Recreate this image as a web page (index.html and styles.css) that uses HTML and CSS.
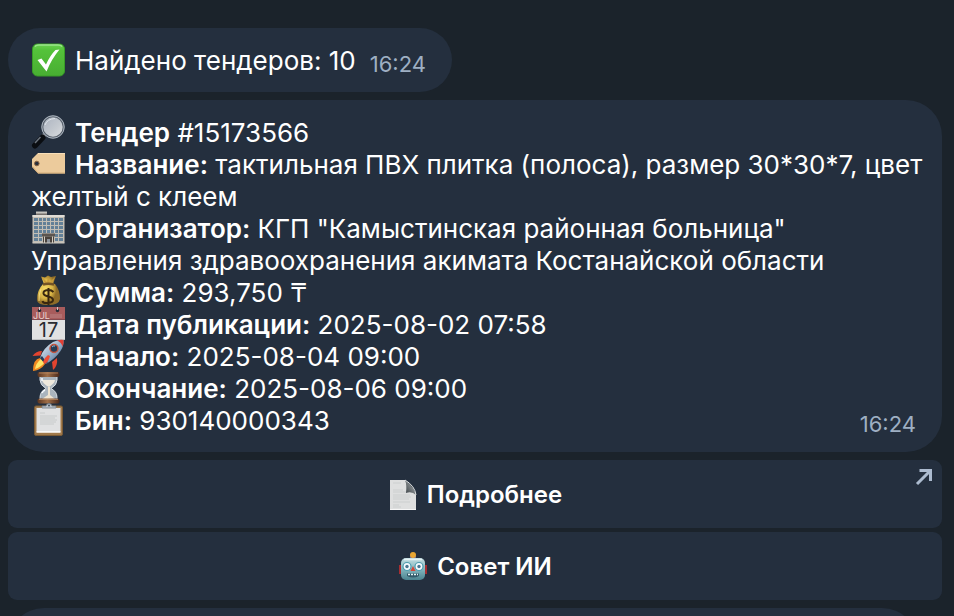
FILE: index.html
```html
<!DOCTYPE html>
<html lang="ru">
<head>
<meta charset="utf-8">
<meta name="viewport" content="width=device-width, initial-scale=1">
<title>Тендеры</title>
<link rel="stylesheet" href="styles.css">
</head>
<body>
<main class="chat">
  <article class="bubble bubble-short">
    <p class="line"><svg class="emoji" viewBox="0 0 34 34" aria-hidden="true"><defs><linearGradient id="green" x2="0" y2="1"><stop stop-color="#6bd451"/><stop offset=".2" stop-color="#54c23a"/><stop offset="1" stop-color="#48ae32"/></linearGradient></defs><rect x="1.5" y="1" width="32" height="32" rx="5" fill="url(#green)" stroke="#389c27"/><path d="M4 3.500Q5 2 8 2h19q3 0 4 1.500" fill="none" stroke="#9ae58a" stroke-width="1.500"/><path d="M6.500 17l4-1.500 4.500 6Q19 12.500 24.500 7l4-.5Q20.500 16 15.500 28.500z" fill="#fff"/></svg>Найдено тендеров: 10</p>
    <time class="time">16:24</time>
  </article>

  <article class="bubble bubble-card">
    <p class="line"><svg class="emoji" viewBox="0 0 34 34" aria-hidden="true"><defs><linearGradient id="lens" x2="1" y2="1"><stop stop-color="#aab2bf"/><stop offset=".6" stop-color="#c5cad0"/><stop offset="1" stop-color="#dde0e3"/></linearGradient></defs><path d="M14 19l-3 3.500" stroke="#b9bec4" stroke-width="4"/><path d="M11.500 22.500L4 30.500" stroke="#0a0d11" stroke-width="6" stroke-linecap="round"/><path d="M9.500 22L4 28" stroke="#6b737d" stroke-width="1.500"/><circle cx="22" cy="12" r="10.700" fill="url(#lens)" stroke="#59626d" stroke-width="2"/><circle cx="22" cy="12" r="11.200" fill="none" stroke="#aab3be" stroke-width="1"/><path d="M14 10Q16 4 24 3.500" fill="none" stroke="#dfe5eb" stroke-width="1"/></svg><b>Тендер</b> #15173566</p>
    <p class="line line-plain"><svg class="emoji" viewBox="0 0 34 34" aria-hidden="true"><path d="M7 6h27v20.500H7L1 20v-8z" fill="#eccb9c"/><path d="M7 6.500h27" stroke="#f8dfb9"/><path d="M1.500 19.500L7 26h27" fill="none" stroke="#d5ad79"/><circle cx="5.800" cy="16.500" r="2.300" fill="#29303c" stroke="#8b6544"/></svg><b>Название:</b> тактильная ПВХ плитка (полоса), размер 30*30*7, цвет желтый с клеем</p>
    <p class="line"><svg class="emoji" viewBox="0 0 34 34" aria-hidden="true"><path d="M5 .500h11v3H5z" fill="#c5c4bf"/><path d="M5 2.500h11v2H5z" fill="#746f6b"/><path d="M1.500 4h32v28h-32z" fill="#c2beb5"/><path d="M1.500 4h32v2h-32z" fill="#e0ddd6"/><path d="M3 7h4v3H3zm5 0h3v3H8zm4 0h3v3h-3zm4 0h3v3h-3zm4 0h3v3h-3zm4 0h3v3h-3zm4 0h4v3h-4zM3 11h4v3H3zm5 0h3v3H8zm4 0h3v3h-3zm4 0h3v3h-3zm4 0h3v3h-3zm4 0h3v3h-3zm4 0h4v3h-4zM3 15h4v3H3zm5 0h3v3H8zm4 0h3v3h-3zm4 0h3v3h-3zm4 0h3v3h-3zm4 0h3v3h-3zm4 0h4v3h-4zM3 19h4v3H3zm5 0h3v3H8zm4 0h3v3h-3zm4 0h3v3h-3zm4 0h3v3h-3zm4 0h3v3h-3zm4 0h4v3h-4zM3 23h4v3H3zm5 0h3v3H8zm16 0h3v3h-3zm4 0h4v3h-4zM3 27h4v3H3zm5 0h3v3H8zm16 0h3v3h-3zm4 0h4v3h-4z" fill="#638097"/><path d="M11 22.500h13v3H11z" fill="#5c554f"/><path d="M12 25.500h11V32H12z" fill="#49423d"/><path d="M13.500 25.500v6.500M21.500 25.500v6.500" stroke="#d2ccc0"/><path d="M16 28h3v4h-3z" fill="#8c939b"/><path d="M1.500 32h32" stroke="#d0cbc0"/></svg><b>Организатор:</b> КГП "Камыстинская районная больница" Управления здравоохранения акимата Костанайской области</p>
    <p class="line"><svg class="emoji" viewBox="0 0 34 34" aria-hidden="true"><defs><radialGradient id="sack" cx=".35" cy=".45"><stop stop-color="#f4d965"/><stop offset=".65" stop-color="#d9b445"/><stop offset="1" stop-color="#8f6c27"/></radialGradient></defs><path d="M10 1.500l4 1 3-2 3 1.500 5-1-3 8h2q5 6 5 15-1 6-12 6T6 25q0-10 6-16h1z" fill="url(#sack)"/><path d="M11 2l5 5 1-5 2 5 5-5-3 7h-7z" fill="#c89b3b"/><path d="M12 9.500q5-1.500 11 0" stroke="#735326" stroke-width="2.500" fill="none"/><path d="M22.500 17Q20 14.500 17 15q-5 .500-4.500 3.500.500 2 4.500 3 5 1 5 3.500t-5 3-5.500-2M17.500 13v17" fill="none" stroke="#39270f" stroke-width="2"/><path d="M10 14Q7.500 20 8 26" fill="none" stroke="#f4dc82"/></svg><b>Сумма:</b> 293,750 ₸</p>
    <p class="line"><svg class="emoji" viewBox="0 0 34 34" aria-hidden="true"><rect x="1" y="0" width="33" height="33" fill="#e0e1e2"/><path d="M1 0h33v13H1z" fill="#a85c5c"/><path d="M1 12.500h33" stroke="#844b50"/><circle cx="8.500" cy="3.500" r="1.700" fill="#252c37"/><circle cx="26.500" cy="3.500" r="1.700" fill="#252c37"/><path d="M8.500 3V0m18 3V0" stroke="#d5c3c2" stroke-width="1"/><text class="month" x="2" y="12">JUL</text><path d="M20 7v4m2-4v4m2-4v4m2-4v4m2-4v4m2-4v4" stroke="#bb8484"/><text class="day" x="17.500" y="30" text-anchor="middle">17</text><path d="M1 32.500h33" stroke="#bfc1c3"/></svg><b>Дата публикации:</b> 2025-08-02 07:58</p>
    <p class="line"><svg class="emoji" viewBox="0 0 34 34" aria-hidden="true"><defs><linearGradient id="hull" x2="1" y2="1"><stop stop-color="#f1f6fb"/><stop offset=".5" stop-color="#9bb2cb"/><stop offset="1" stop-color="#33577f"/></linearGradient></defs><path d="M11 12Q5 12 1.500 17l8-.5zM21 23l1 8q5-4 4-12z" fill="#e3442f"/><path d="M9 19Q2 20 2 32q8-1 12-7z" fill="#f28a20"/><path d="M10 20q-5 4-6 10 6-2 9-6z" fill="#ffe568"/><path d="M9 19q3-10 13-16Q27 .500 32.500 1q.500 6-3 11Q24 20 15 25z" fill="url(#hull)"/><path d="M26 1.500q3-1 6.500-.5.500 3-.8 6.500Q30 3 26 1.500z" fill="#df3e34"/><path d="M9 19q2 3 6 6l2-2q-4-2-6-6z" fill="#243b59"/><circle cx="23" cy="9.500" r="4" fill="#253c55" stroke="#c6553e" stroke-width="1.500"/><path d="M21 8q1-1.500 3-1" fill="none" stroke="#89bada"/><path d="M17 16q-4 3-5 7l2 2q4-3 5-8z" fill="#ee4d35"/></svg><b>Начало:</b> 2025-08-04 09:00</p>
    <p class="line"><svg class="emoji" viewBox="0 0 34 34" aria-hidden="true"><defs><linearGradient id="wood"><stop stop-color="#5b3520"/><stop offset=".45" stop-color="#a06f48"/><stop offset="1" stop-color="#49281b"/></linearGradient></defs><path d="M9 5h17v4q0 5-6 8.500 6 3 6 9v3H9v-3q0-6 6-9-6-3.500-6-8.500z" fill="#aab4bd" stroke="#dae0e5"/><path d="M11 9h13q0 3-6 7-6-3-7-7z" fill="#eee8dc"/><path d="M17 16h2v8l5 4H11l6-4z" fill="#efe4d1"/><path d="M11 22q1-2 3-3M11 7v3" stroke="#f7faff" stroke-width="1.500"/><rect x="6.500" y="1" width="22" height="5" rx="2" fill="url(#wood)"/><rect x="6.500" y="27.500" width="22" height="5" rx="2" fill="url(#wood)"/><path d="M8 2h19M8 28.500h19" stroke="#c1946c" stroke-width=".700"/></svg><b>Окончание:</b> 2025-08-06 09:00</p>
    <p class="line"><svg class="emoji" viewBox="0 0 34 34" aria-hidden="true"><rect x="3.500" y="3" width="28" height="29.500" rx="1.500" fill="#a17a4b" stroke="#795a35"/><path d="M5.500 5h24v24h-24z" fill="#e0e1e2"/><path d="M5.500 29h24" stroke="#fff" stroke-width="1.500"/><path d="M9 10h5m-5 3h17m-17 2h15m-15 2h17m-17 2h16m-16 2h14" stroke="#c3c5c7" stroke-width=".800"/><path d="M11 5V3h4q.500-2.500 3-2.500T21 3h4v2z" fill="#b8c0c8" stroke="#737c86" stroke-width=".800"/><circle cx="18" cy="2.500" r="1" fill="#42505e"/></svg><b>Бин:</b> 930140000343</p>
    <time class="time time-corner">16:24</time>
  </article>

  <div class="actions">
    <button class="action" type="button"><svg class="action-emoji" viewBox="0 0 30 32" aria-hidden="true"><defs><linearGradient id="fold" x1="1" y1="0" x2="0" y2="1"><stop stop-color="#b6bbbc"/><stop offset="1" stop-color="#343b40"/></linearGradient></defs><path d="M2 1h15l11 14v16H2z" fill="#dedfdf"/><path d="M5 4h8M5 11h10m-10 2h13M5 16h17M5 18h18M5 20h16M5 23h17M5 26h6m-6 2h8" stroke="#c6c8c9" stroke-width=".700"/><path d="M17 1q2 5 1 13 6-2 10 2Q27 9 17 1z" fill="url(#fold)"/><path d="M17 1q10 6 11 15" fill="none" stroke="#dde0e0"/><path d="M2 30.500h26" stroke="#f6f6f6"/></svg>Подробнее<svg class="external" viewBox="0 0 18 18" aria-hidden="true"><path d="M2 16L15 3M4.500 2.500h11V13" fill="none" stroke="#acbbcf" stroke-width="3"/></svg></button>
    <button class="action" type="button"><svg class="action-emoji" viewBox="0 0 30 32" aria-hidden="true"><defs><linearGradient id="face" x2="0" y2="1"><stop stop-color="#c4dfe2"/><stop offset=".5" stop-color="#83b7bf"/><stop offset="1" stop-color="#4b838f"/></linearGradient></defs><path d="M1 14h4v9H1zm24 0h4v9h-4z" fill="#a62e32"/><path d="M12 5h6v4h-6z" fill="#72689a"/><circle cx="15" cy="4" r="3" fill="#e9a632"/><rect x="3" y="7" width="24" height="22" rx="5" fill="url(#face)"/><path d="M6 8.500h18" stroke="#e5f3f4" stroke-width="1.500"/><g fill="#f5fbff" stroke="#4e9cae" stroke-width="1.200"><circle cx="9" cy="15.500" r="4"/><circle cx="21" cy="15.500" r="4"/></g><circle cx="9" cy="15.500" r="1.700" fill="#4a7790"/><circle cx="21" cy="15.500" r="1.700" fill="#4a7790"/><path d="M15 15l2.500 5h-5z" fill="#d34739"/><path d="M9 22.500h12v2.500q-6 3-12 0z" fill="#315969"/><path d="M10 23.500h10" stroke="#e2f3f4" stroke-width="1.500" stroke-dasharray="2 1"/></svg>Совет ИИ</button>
  </div>

  <article class="bubble bubble-next"></article>
</main>
</body>
</html>
```
FILE: styles.css
```css
* {
  box-sizing: border-box;
}

body {
  margin: 0;
  background: #1b232b;
  color: #fff;
  font-family: Inter, "Noto Sans", sans-serif;
}

.chat {
  display: flex;
  flex-direction: column;
  align-items: flex-start;
  gap: 8px;
  height: 100vh;
  padding: 28px 12px 0 8px;
  overflow: hidden;
}

.chat > * {
  flex-shrink: 0;
}

.bubble {
  position: relative;
  padding: 17px 12px 15px 23px;
  background: #242f3e;
  border-radius: 36px;
}

.bubble-short {
  display: flex;
  align-items: flex-end;
  gap: 14px;
  padding-right: 26px;
  border-radius: 32px;
}

.bubble-card {
  width: 100%;
}

.bubble-next {
  width: calc(100% - 24px);
  min-height: 96px;
}

.line {
  margin: 0;
  font-size: 26px;
  line-height: 32px;
}

.line-plain {
  font-variant-ligatures: no-contextual;
}

.line b {
  font-weight: 600;
}

.emoji {
  width: 34px;
  height: 34px;
  margin: -4px 10px -4px 0;
  vertical-align: -3px;
}

.month {
  fill: #e9d2d1;
  font-size: 9px;
}

.day {
  fill: #292d32;
  font-size: 20px;
}

.time {
  color: #9eafc3;
  font-size: 22px;
  line-height: 26px;
}

.time-corner {
  position: absolute;
  right: 26px;
  bottom: 15px;
}

.actions {
  display: flex;
  flex-direction: column;
  gap: 4px;
  width: 100%;
}

.action {
  position: relative;
  display: flex;
  align-items: center;
  justify-content: center;
  gap: 9px;
  min-height: 68px;
  padding: 18px 16px 16px;
  border: 0;
  border-radius: 9px;
  background: #242f3e;
  color: #fff;
  font: 600 24px/34px Inter, "Noto Sans", sans-serif;
}

.action-emoji {
  width: 30px;
  height: 32px;
}

.external {
  position: absolute;
  top: 8px;
  right: 9px;
  width: 18px;
  height: 18px;
}
```
